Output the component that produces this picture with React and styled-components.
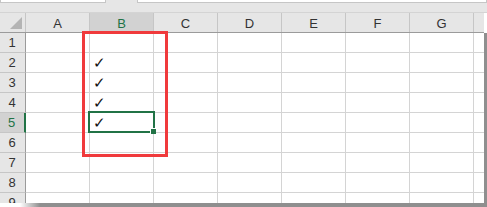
import React from 'react'
import styled, { createGlobalStyle } from 'styled-components'

const GlobalStyle = createGlobalStyle`
  html, body {
    margin: 0;
    padding: 0;
    background: #ffffff;
  }
  * {
    box-sizing: border-box;
  }
`

const COLS = ['A', 'B', 'C', 'D', 'E', 'F', 'G', 'H']
const ROWS = [1, 2, 3, 4, 5, 6, 7, 8, 9]
const CHECKED = [2, 3, 4, 5]
const ACTIVE_COL = 'B'
const ACTIVE_ROW = 5

const Window = styled.div`
  position: relative;
  width: 487px;
  height: 207px;
  overflow: hidden;
  background: #ffffff;
  font-family: 'Liberation Sans', Arial, sans-serif;
  display: flex;
  flex-direction: column;
`

const FormulaStrip = styled.div`
  height: 13px;
  flex: none;
  display: flex;
  align-items: flex-start;
  gap: 31px;
  background: #e6e6e6;
  border-bottom: 1px solid #d4d4d4;
`

const FieldBox = styled.div`
  height: 3px;
  width: ${(p) => p.$width || 'auto'};
  flex: ${(p) => (p.$grow ? 1 : 'none')};
  background: #ffffff;
  border: 1px solid #c6c6c6;
  border-top: none;
`

const HeaderRow = styled.div`
  height: 20px;
  flex: none;
  display: flex;
`

const HeaderCells = styled.div`
  width: 484px;
  flex: none;
  display: flex;
  overflow: hidden;
  background: #e6e6e6;
  border-bottom: 1px solid #9b9b9b;
`

const Corner = styled.div`
  position: relative;
  width: 26px;
  flex: none;
  border-right: 1px solid #c6c6c6;
`

const CornerTriangle = styled.svg`
  position: absolute;
  left: 10px;
  top: 4px;
`

const ColHeader = styled.div`
  width: 64px;
  flex: none;
  display: flex;
  align-items: center;
  justify-content: center;
  font-size: 13px;
  padding-top: 1px;
  color: ${(p) => (p.$active ? '#217346' : '#333333')};
  background: ${(p) => (p.$active ? '#d2d2d2' : 'transparent')};
  border-right: 1px solid #c6c6c6;
`

const Body = styled.div`
  flex: 1;
  display: flex;
  overflow: hidden;
`

const Grid = styled.div`
  width: 484px;
  flex: none;
  display: flex;
  flex-direction: column;
  overflow: hidden;
`

const Row = styled.div`
  height: 20px;
  flex: none;
  display: flex;
`

const RowHeader = styled.div`
  width: 26px;
  flex: none;
  display: flex;
  align-items: center;
  justify-content: center;
  font-size: 13px;
  padding-right: 1px;
  color: ${(p) => (p.$active ? '#217346' : '#333333')};
  background: ${(p) => (p.$active ? '#d2d2d2' : '#e6e6e6')};
  border-bottom: 1px solid #c6c6c6;
  border-right: ${(p) => (p.$active ? '2px solid #217346' : '1px solid #9b9b9b')};
`

const Cell = styled.div`
  width: 64px;
  flex: none;
  display: flex;
  align-items: center;
  padding-left: 3px;
  padding-top: 1px;
  font-family: 'DejaVu Sans', sans-serif;
  font-weight: 200;
  font-size: 15px;
  color: #111111;
  border-right: 1px solid #d4d4d4;
  border-bottom: 1px solid #d4d4d4;
`

const ScrollEdge = styled.div`
  flex: 1;
  background: #8f8f8f;
`

const BottomEdge = styled.div`
  height: 4px;
  flex: none;
  background: linear-gradient(to right, #ffffff 0, #ffffff 20px, #8f8f8f 40px, #8f8f8f 100%);
`

const Highlight = styled.div`
  position: absolute;
  left: 82px;
  top: 31px;
  width: 86px;
  height: 126px;
  border: 3px solid #f03a3c;
  pointer-events: none;
`

const Selection = styled.div`
  position: absolute;
  left: 88px;
  top: 111px;
  width: 67px;
  height: 22px;
  border: 2px solid #217346;
`

const FillHandle = styled.div`
  position: absolute;
  right: -3px;
  bottom: -3px;
  width: 6px;
  height: 6px;
  background: #217346;
  border-top: 1px solid #ffffff;
  border-left: 1px solid #ffffff;
`

const App = () => {
  return (
    <Window>
      <GlobalStyle />
      <FormulaStrip>
        <FieldBox $width="106px" />
        <FieldBox $grow />
      </FormulaStrip>
      <HeaderRow>
        <HeaderCells>
          <Corner>
            <CornerTriangle width="12" height="12" viewBox="0 0 12 12">
              <polygon points="12,0 12,12 0,12" fill="#b4b4b4" />
            </CornerTriangle>
          </Corner>
          {COLS.map((col) => (
            <ColHeader key={col} $active={col === ACTIVE_COL}>
              {col === 'H' ? '' : col}
            </ColHeader>
          ))}
        </HeaderCells>
      </HeaderRow>
      <Body>
        <Grid>
          {ROWS.map((row) => (
            <Row key={row}>
              <RowHeader $active={row === ACTIVE_ROW}>{row}</RowHeader>
              {COLS.map((col) => (
                <Cell key={col}>
                  {col === 'B' && CHECKED.includes(row) ? '✓' : ''}
                </Cell>
              ))}
            </Row>
          ))}
        </Grid>
        <ScrollEdge />
      </Body>
      <BottomEdge />
      <Highlight />
      <Selection>
        <FillHandle />
      </Selection>
    </Window>
  )
}

export default App
